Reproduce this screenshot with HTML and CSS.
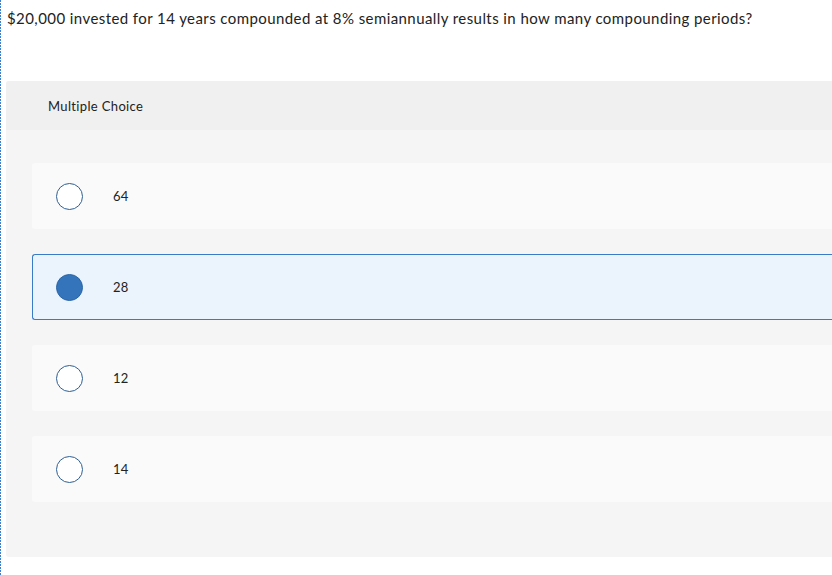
FILE: index.html
```html
<!DOCTYPE html>
<html>
<head>
<meta charset="utf-8">
<link rel="stylesheet" href="styles.css">
</head>
<body>
<div class="page">
  <p class="question">$20,000 invested for 14 years compounded at 8% semiannually results in how many compounding periods?</p>
  <div class="panel">
    <div class="panel-head">Multiple Choice</div>
    <div class="panel-body">
      <div class="option"><span class="radio"></span><span class="label">64</span></div>
      <div class="option selected"><span class="radio"></span><span class="label">28</span></div>
      <div class="option"><span class="radio"></span><span class="label">12</span></div>
      <div class="option"><span class="radio"></span><span class="label">14</span></div>
    </div>
  </div>
</div>
</body>
</html>
```
FILE: styles.css
```css
html, body {
  margin: 0;
  padding: 0;
  background: #fff;
}
body {
  width: 832px;
  height: 575px;
  overflow: hidden;
  font-family: Lato, "Liberation Sans", sans-serif;
  color: #222;
}
.page {
  height: 575px;
  padding-left: 6px;
  background-image: repeating-linear-gradient(to bottom, #3b7fd0 0 2px, transparent 2px 3px);
  background-size: 1px 100%;
  background-repeat: no-repeat;
  box-sizing: border-box;
}
.question {
  margin: 0;
  padding: 8px 0 0 1px;
  font-size: 15px;
  letter-spacing: 0.42px;
  line-height: 20px;
  color: #222;
  height: 81px;
  box-sizing: border-box;
}
.panel {
  background: #f5f5f5;
  border-radius: 3px 0 0 3px;
  height: 476px;
}
.panel-head {
  background: #f0f0f0;
  height: 49px;
  padding-left: 42px;
  font-size: 13px;
  letter-spacing: 0.35px;
  line-height: 50px;
  color: #222;
  border-radius: 3px 0 0 0;
}
.panel-body {
  padding: 33px 0 0 26px;
  display: flex;
  flex-direction: column;
  gap: 25px;
}
.option {
  height: 66px;
  background: #fafafa;
  border-radius: 3px 0 0 3px;
  display: flex;
  align-items: center;
  padding-left: 24px;
  box-sizing: border-box;
}
.option.selected {
  background: #ebf3fc;
  border: 1px solid #3a7bc8;
  border-right: none;
  padding-left: 23px;
}
.radio {
  width: 25px;
  height: 25px;
  border: 1.5px solid #2e5f94;
  border-radius: 50%;
  background: #fff;
  flex: none;
}
.selected .radio {
  background: #3474bb;
  border-color: #2b65a5;
}
.label {
  margin-left: 30px;
  font-size: 13px;
  letter-spacing: 0.3px;
  color: #222;
}
```
